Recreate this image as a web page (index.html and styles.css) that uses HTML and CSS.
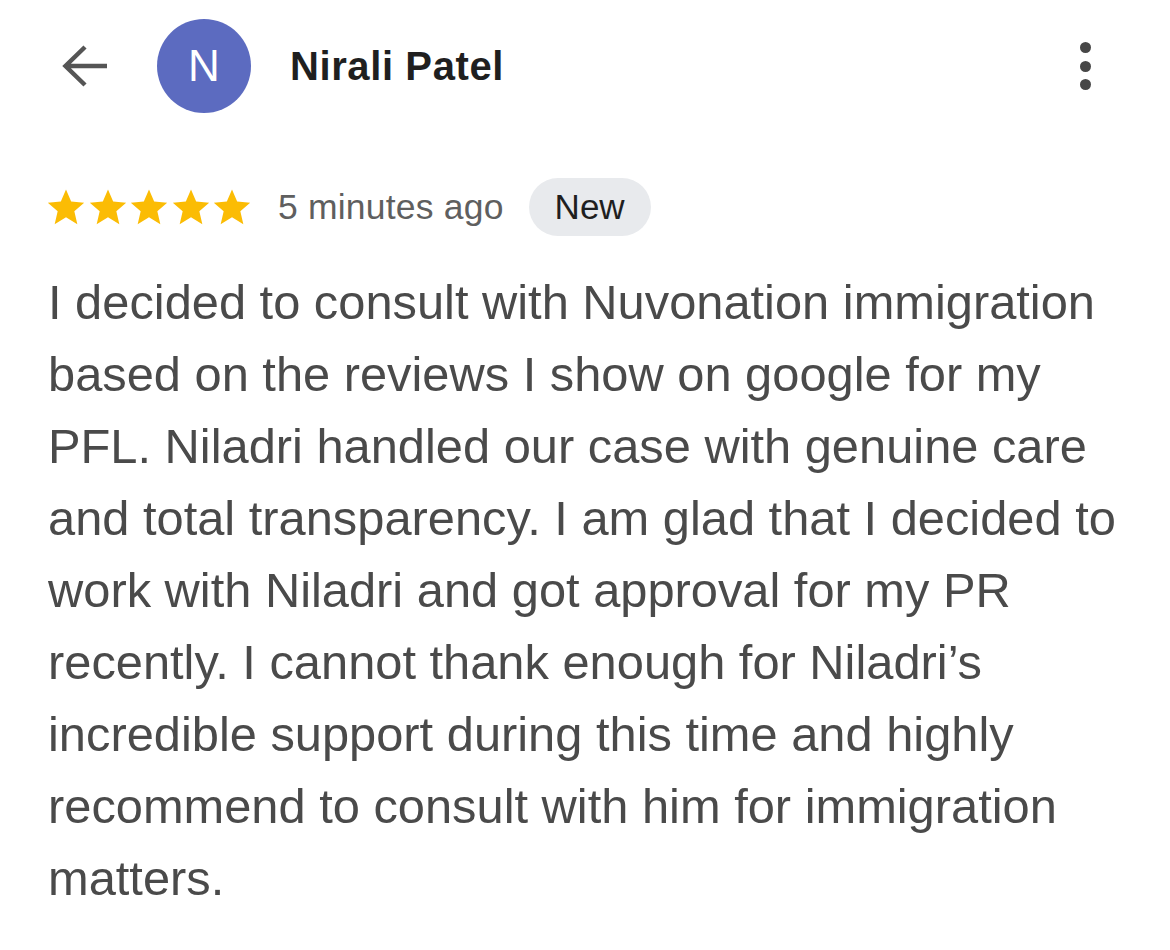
FILE: index.html
```html
<!DOCTYPE html>
<html>
<head>
<meta charset="utf-8">
<link rel="stylesheet" href="styles.css">
</head>
<body>
<div class="page">
  <header class="top">
    <svg class="back" viewBox="0 0 48 48" width="48" height="48">
      <path d="M47 24H5M25 5L5.5 24 25 43" fill="none" stroke="#555" stroke-width="4.5"/>
    </svg>
    <div class="avatar">N</div>
    <div class="name">Nirali Patel</div>
    <div class="more"><span></span><span></span><span></span></div>
  </header>
  <div class="meta">
    <div class="stars">
      <svg viewBox="0 0 24 24"><path d="M12 1.5l3.1 7.2 7.8.7-5.9 5.2 1.8 7.7L12 18.2l-6.8 4.1 1.8-7.7L1.1 9.4l7.8-.7z"/></svg>
      <svg viewBox="0 0 24 24"><path d="M12 1.5l3.1 7.2 7.8.7-5.9 5.2 1.8 7.7L12 18.2l-6.8 4.1 1.8-7.7L1.1 9.4l7.8-.7z"/></svg>
      <svg viewBox="0 0 24 24"><path d="M12 1.5l3.1 7.2 7.8.7-5.9 5.2 1.8 7.7L12 18.2l-6.8 4.1 1.8-7.7L1.1 9.4l7.8-.7z"/></svg>
      <svg viewBox="0 0 24 24"><path d="M12 1.5l3.1 7.2 7.8.7-5.9 5.2 1.8 7.7L12 18.2l-6.8 4.1 1.8-7.7L1.1 9.4l7.8-.7z"/></svg>
      <svg viewBox="0 0 24 24"><path d="M12 1.5l3.1 7.2 7.8.7-5.9 5.2 1.8 7.7L12 18.2l-6.8 4.1 1.8-7.7L1.1 9.4l7.8-.7z"/></svg>
    </div>
    <span class="time">5 minutes ago</span>
    <span class="chip">New</span>
  </div>
  <p class="review">I decided to consult with Nuvonation immigration based on the reviews I show on google for my PFL. Niladri handled our case with genuine care and total transparency. I am glad that I decided to work with Niladri and got approval for my PR recently. I cannot thank enough for Niladri’s incredible support during this time and highly recommend to consult with him for immigration matters.</p>
</div>
</body>
</html>
```
FILE: styles.css
```css
* { box-sizing: border-box; }
html, body { margin: 0; padding: 0; background: #fff; }
body { font-family: "Liberation Sans", Arial, sans-serif; }
.page { width: 1170px; height: 950px; padding: 0 0 0 48px; overflow: hidden; }
.top { display: flex; align-items: center; height: 132px; }
.back { margin-left: 12px; width: 48px; height: 48px; }
.avatar {
  margin-left: 49px; width: 94px; height: 94px; border-radius: 50%;
  background: #5c6bc0; color: #fff; font-size: 44px;
  display: flex; align-items: center; justify-content: center;
}
.name { margin-left: 39px; font-size: 40px; font-weight: bold; color: #1f1f1f; letter-spacing: 0.6px; }
.more { margin-left: auto; margin-right: 79px; display: flex; flex-direction: column; gap: 7.5px; }
.more span { width: 11px; height: 11px; border-radius: 50%; background: #474747; display: block; }
.meta { display: flex; align-items: center; margin-top: 46px; height: 58px; }
.stars { display: flex; gap: 1.5px; margin-left: -2px; }
.stars svg { width: 40px; height: 40px; fill: #fbbc04; }
.time { margin-left: 26px; font-size: 35.5px; color: #5f5f5f; letter-spacing: 0.2px; }
.chip {
  margin-left: 25px; height: 58px; padding: 0 26px; border-radius: 29px;
  background: #e8eaed; color: #1f1f1f; font-size: 35px;
  display: flex; align-items: center;
}
.review { margin: 30px 0 0; width: 1090px; font-size: 48.8px; line-height: 72px; color: #4a4a4a; }
```
